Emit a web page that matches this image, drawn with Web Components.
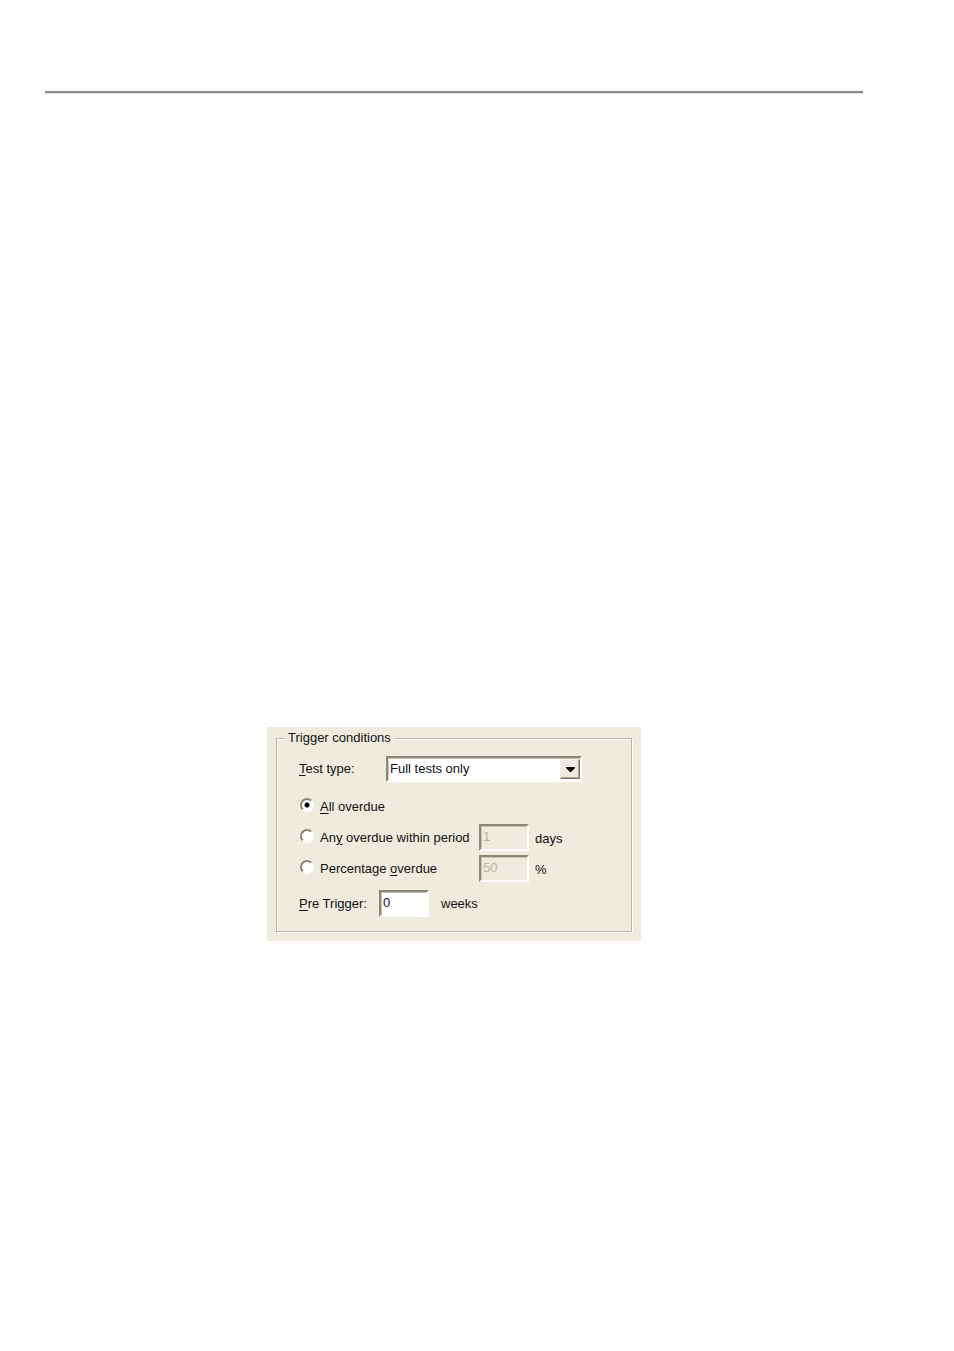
<!DOCTYPE html>
<html lang="en">
<head>
<meta charset="utf-8">
<meta name="viewport" content="width=device-width, initial-scale=1">
<title>Trigger conditions</title>
<style>
  body {
    margin: 0;
    background: #fff;
    color: #111;
    font: 13px/16px "Liberation Sans", Arial, sans-serif;
  }
</style>
</head>
<body>
<manual-page>
  <group-box heading="Trigger conditions">
    <test-type-field></test-type-field>
    <overdue-options></overdue-options>
    <pre-trigger-field></pre-trigger-field>
  </group-box>
</manual-page>

<script>
// Sunken Windows edge shared by every text box and drop-down
const fieldStyles = `
  * { box-sizing: border-box; }
  label { white-space: nowrap; }
  u { text-underline-offset: 2px; }
  .box {
    font: inherit;
    color: #111;
    background: #fff;
    border: 2px solid;
    border-color: #8a8678 #fff #fff #8a8678;
    border-radius: 0;
    outline: none;
  }
  input.box {
    width: 50px;
    height: 27px;
    padding: 0 2px 3px;
    box-shadow: inset 1px 1px 0 #c9c5b6;
  }
  input.box:disabled {
    color: #b5b2a2;
    background: #efebde;
  }
`;

class ManualPage extends HTMLElement {
  constructor() {
    super();
    this.attachShadow({ mode: "open" });
    this.shadowRoot.innerHTML = `
      <style>
        :host {
          display: block;
          padding: 91px 91px 64px 45px;
        }
        hr {
          height: 2px;
          margin: 0;
          border: 0;
          background: #8b8a84;
          box-shadow: 0 1px 0 #e4e3dd;
        }
        main {
          margin: 634px 0 0 222px;
          max-width: 374px;
        }
      </style>
      <hr>
      <main><slot></slot></main>
    `;
  }
}

class GroupBox extends HTMLElement {
  constructor() {
    super();
    this.attachShadow({ mode: "open" });
    this.shadowRoot.innerHTML = `
      <style>
        :host {
          display: block;
          padding: 3px 9px 9px;
          background: #efebde;
        }
        fieldset {
          min-width: 0;
          margin: 0;
          padding: 10px 22px 14px;
          border: 1px solid #b9b7a9;
          box-shadow: 1px 1px 0 #fff, inset 1px 1px 0 #fff;
        }
        legend {
          margin-left: -14px;
          padding: 0 3px;
          background: #efebde;
        }
      </style>
      <fieldset>
        <legend>${this.getAttribute("heading") || ""}</legend>
        <slot></slot>
      </fieldset>
    `;
  }
}

class TestTypeField extends HTMLElement {
  constructor() {
    super();
    this.attachShadow({ mode: "open" });
    this.shadowRoot.innerHTML = `
      <style>
        ${fieldStyles}
        :host {
          display: grid;
          grid-template-columns: 87px minmax(0, 196px);
          align-items: center;
        }
        .select {
          display: grid;
        }
        .select > * {
          grid-area: 1 / 1;
        }
        select.box {
          appearance: none;
          width: 100%;
          height: 26px;
          padding: 0 24px 0 2px;
          box-shadow: inset 1px 1px 0 #c9c5b6;
        }
        .arrow {
          justify-self: end;
          align-self: center;
          width: 20px;
          height: 20px;
          margin-right: 2px;
          background: #efebde;
          border: 1px solid;
          border-color: #f4f0e6 #77746a #77746a #f4f0e6;
          box-shadow: inset -1px -1px 0 #aaa698;
          pointer-events: none;
        }
        svg { display: block; }
      </style>
      <label for="type"><u>T</u>est type:</label>
      <div class="select">
        <select class="box" id="type">
          <option>Full tests only</option>
        </select>
        <span class="arrow">
          <svg width="18" height="18" viewBox="0 0 18 18" aria-hidden="true">
            <path d="M5 7h9v1l-4 4h-1l-4-4z" fill="#000"/>
          </svg>
        </span>
      </div>
    `;
  }
}

class OverdueOptions extends HTMLElement {
  constructor() {
    super();
    this.attachShadow({ mode: "open" });
    this.shadowRoot.innerHTML = `
      <style>
        ${fieldStyles}
        :host {
          display: grid;
          grid-template-columns: 174px 50px auto;
          grid-auto-rows: 27px;
          gap: 4px 6px;
          align-items: center;
          margin-top: 11px;
        }
        .option {
          display: flex;
          align-items: center;
          gap: 6px;
        }
        .all { grid-column: 1 / -1; }
        .unit { padding-top: 2px; }
        input[type="radio"] {
          appearance: none;
          flex: none;
          width: 14px;
          height: 14px;
          margin: 0 0 4px 1px;
          border: 2px solid;
          border-color: #8a8678 #fff #fff #8a8678;
          border-radius: 50%;
          background: #fff;
        }
        input[type="radio"]:checked {
          background: radial-gradient(circle, #000 2px, #fff 3px);
        }
      </style>
      <div class="option all">
        <input type="radio" name="overdue" id="all" checked>
        <label for="all"><u>A</u>ll overdue</label>
      </div>
      <div class="option">
        <input type="radio" name="overdue" id="any">
        <label for="any">An<u>y</u> overdue within period</label>
      </div>
      <input class="box" id="days" value="1" disabled>
      <label class="unit" for="days">days</label>
      <div class="option">
        <input type="radio" name="overdue" id="percentage">
        <label for="percentage">Percentage <u>o</u>verdue</label>
      </div>
      <input class="box" id="percent" value="50" disabled>
      <label class="unit" for="percent">%</label>
    `;

    this.shadowRoot.addEventListener("change", () => this.update());
  }

  // only the box beside the chosen option can be edited
  update() {
    const root = this.shadowRoot;
    root.getElementById("days").disabled = !root.getElementById("any").checked;
    root.getElementById("percent").disabled =
      !root.getElementById("percentage").checked;
  }
}

class PreTriggerField extends HTMLElement {
  constructor() {
    super();
    this.attachShadow({ mode: "open" });
    this.shadowRoot.innerHTML = `
      <style>
        ${fieldStyles}
        :host {
          display: grid;
          grid-template-columns: 80px 50px auto;
          align-items: center;
          margin-top: 8px;
        }
        .unit { padding-left: 12px; }
      </style>
      <label for="weeks"><u>P</u>re Trigger:</label>
      <input class="box" id="weeks" value="0">
      <label class="unit" for="weeks">weeks</label>
    `;
  }
}

customElements.define("manual-page", ManualPage);
customElements.define("group-box", GroupBox);
customElements.define("test-type-field", TestTypeField);
customElements.define("overdue-options", OverdueOptions);
customElements.define("pre-trigger-field", PreTriggerField);
</script>
</body>
</html>
